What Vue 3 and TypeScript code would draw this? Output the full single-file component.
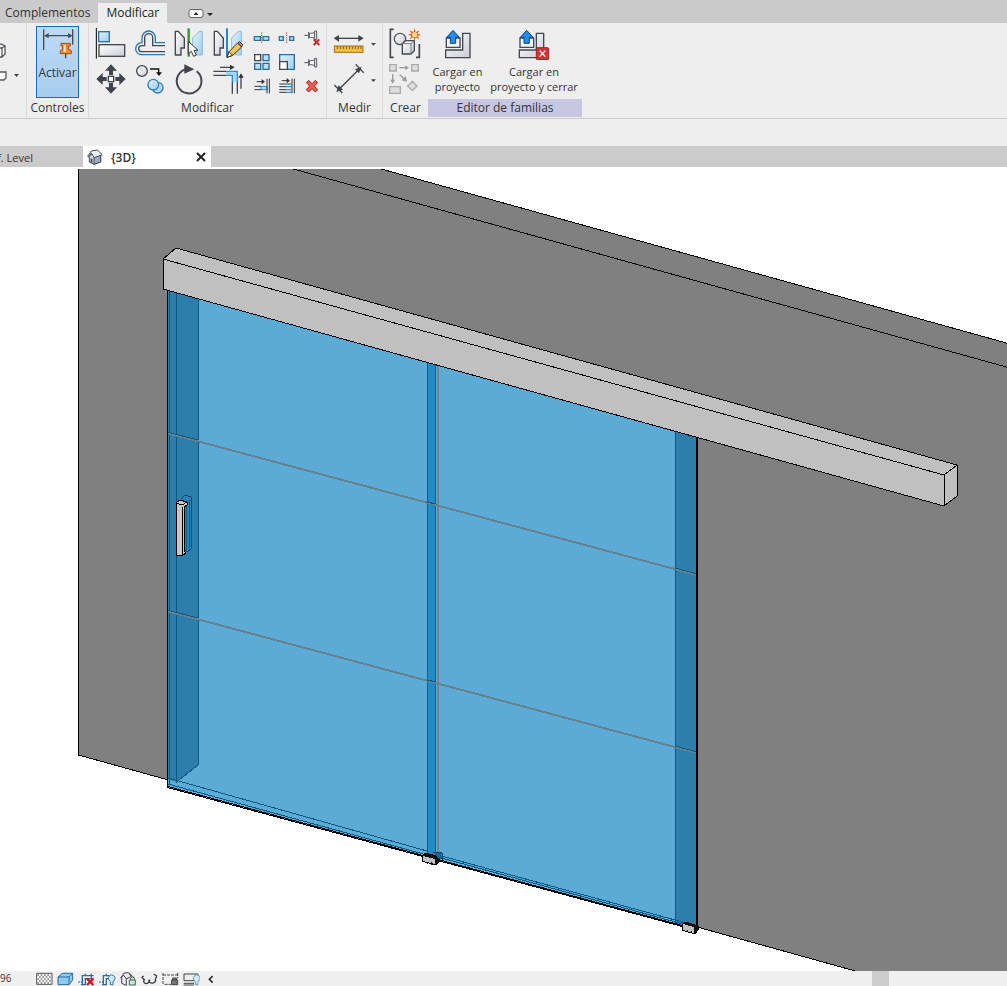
<script setup lang="ts">
import { ref } from 'vue'

const activeTab = ref('Modificar')
const controlsActive = ref(true)
</script>

<template>
  <div class="app">
    <svg class="defs" aria-hidden="true">
      <defs>
        <linearGradient id="metal" x1="0" y1="0" x2="1" y2="1">
          <stop offset="0" stop-color="#fff" />
          <stop offset="1" stop-color="#c9ced6" />
        </linearGradient>
        <linearGradient id="sky" x1="0" y1="0" x2="1" y2="1">
          <stop offset="0" stop-color="#e2f2fc" />
          <stop offset="1" stop-color="#9ccdf0" />
        </linearGradient>
        <g id="pin">
          <path d="M22 19C27 21 33 20 38 16V36C33 32 27 31 22 33Z" fill="#f8f8f8" stroke="#555861" stroke-width="3" />
          <path d="M7 26H20M20 16V36" stroke="#555861" stroke-width="3" />
          <path d="M38 13H44V39H38Z" fill="#f8f8f8" stroke="#555861" stroke-width="3" />
        </g>
        <g id="load">
          <path d="M64 16H86V89H13V66H64Z" fill="url(#metal)" stroke="#44474f" stroke-width="4" />
          <path d="M15 30H56V58H15Z" fill="#f4f5f7" stroke="#44474f" stroke-width="4" />
          <path d="M35 7L54 28H43V46H27V28H16Z" fill="#1e8ef0" stroke="#0b4789" stroke-width="3" />
        </g>
      </defs>
    </svg>

    <nav class="tabs">
      <button class="tab" :class="{ on: activeTab === 'Complementos' }" @click="activeTab = 'Complementos'">Complementos</button>
      <button class="tab" :class="{ on: activeTab === 'Modificar' }" @click="activeTab = 'Modificar'">Modificar</button>
      <button class="collapse" aria-label="Minimizar cinta">
        <svg width="26" height="12" viewBox="0 0 26 12">
          <rect x="2" y="1.500" width="14" height="8" rx="2" fill="#fafafa" stroke="#62656b" />
          <path d="M6.500 7L9 4L11.500 7ZM20 5H26L23 8Z" fill="#25262a" />
        </svg>
      </button>
    </nav>

    <section class="ribbon">
      <div class="panel first">
        <button class="bare" aria-label="Forma">
          <svg width="7" height="16" viewBox="0 0 7 16"><path d="M-4 3L1 1L5 3V11L2 14H-4M2 14V5L5 3M2 5H-4" fill="#fff" stroke="#555861" stroke-width="1.300" /></svg>
        </button>
        <button class="bare wide" aria-label="Opciones de forma">
          <svg width="19" height="14" viewBox="0 0 19 14"><path d="M-3 3H6V9L4 11H-3" fill="#fff" stroke="#555861" stroke-width="1.300" /><path d="M14 5H19L16.500 8Z" fill="#444" /></svg>
        </button>
      </div>

      <div class="panel controls">
        <div class="tools">
          <button class="activate" :class="{ pressed: controlsActive }" @click="controlsActive = !controlsActive">
            <svg width="32" height="32" viewBox="0 0 96 96">
              <path d="M5 4V66M92 4V50M8 23H90" stroke="#444b59" stroke-width="4" />
              <path d="M7 23L20 15V31ZM91 23L78 15V31Z" fill="#444b59" />
              <path d="M71 72V91" stroke="#3e4450" stroke-width="4" />
              <path d="M57 46H85V54H80V64L88 68V77H55V68L62 64V54H57Z" fill="#f08a35" stroke="#ad4b12" stroke-width="3" />
              <path d="M68 50V72" stroke="#ffe3bd" stroke-width="6" />
            </svg>
            <span>Activar</span>
          </button>
        </div>
        <div class="label">Controles</div>
      </div>

      <div class="panel modify">
        <div class="tools">
          <div class="big">
            <button class="bare" aria-label="Alinear"><svg width="32" height="32" viewBox="0 0 96 96">
              <path d="M4 0V92" stroke="#000" stroke-width="3" />
              <rect x="11" y="11" width="32" height="30" fill="url(#sky)" stroke="#2874ad" stroke-width="4" />
              <rect x="12" y="50" width="77" height="35" fill="url(#metal)" stroke="#44474f" stroke-width="4" />
            </svg></button>
            <button class="bare" aria-label="Desfase"><svg width="32" height="32" viewBox="0 0 96 96">
              <path d="M93 44H64V29A20 20 0 0 0 24 29V44H22A17 18 0 0 0 22 80H93" fill="#e5f0f8" stroke="#2d77ae" stroke-width="4" />
              <path d="M93 53H56V29A12 12 0 0 0 32 29V53H23A9 9 0 0 0 23 71H93" fill="#eee" stroke="#44474f" stroke-width="4" />
            </svg></button>
            <button class="bare" aria-label="Reflejar por eje"><svg width="32" height="32" viewBox="0 0 96 96">
              <path d="M7 10H16L34 30V60H24V81H7Z" fill="url(#metal)" stroke="#44474f" stroke-width="4" />
              <path d="M88 10H79L59 30V60H70V81H88Z" fill="url(#sky)" stroke="#8bbddf" stroke-width="3" />
              <path d="M47 1V86" stroke="#37922d" stroke-width="7" />
              <path d="M46 40V77L55 70L62 85L70 81L63 67H75Z" fill="#fff" stroke="#333" stroke-width="3" />
            </svg></button>
            <button class="bare" aria-label="Reflejar dibujando eje"><svg width="32" height="32" viewBox="0 0 96 96">
              <path d="M7 10H16L34 30V60H24V81H7Z" fill="url(#metal)" stroke="#44474f" stroke-width="4" />
              <path d="M88 10H79L59 30V60H70V81H88Z" fill="url(#sky)" stroke="#8bbddf" stroke-width="3" />
              <path d="M45 1V86" stroke="#2d83c7" stroke-width="6" />
              <path d="M45 88L51 71L77 45L89 57L62 82Z" fill="#f8c653" stroke="#3b3225" stroke-width="3" />
              <path d="M45 88L51 71L62 82Z" fill="#fff0c9" stroke="#3b3225" stroke-width="3" />
              <path d="M77 45L83 41L92 50L89 57Z" fill="#d98575" stroke="#3b3225" stroke-width="3" />
            </svg></button>
            <button class="bare" aria-label="Desplazar"><svg width="32" height="32" viewBox="0 0 96 96">
              <path d="M48 1L66 20H54V33H42V20H30ZM48 89L66 70H54V57H42V70H30ZM4 45L23 27V39H35V51H23V63ZM92 45L73 27V39H61V51H73V63Z" fill="#3f434c" />
              <rect x="40" y="37" width="16" height="16" fill="#fff" stroke="#3f434c" stroke-width="4" />
            </svg></button>
            <button class="bare" aria-label="Copiar"><svg width="32" height="32" viewBox="0 0 96 96">
              <circle cx="24" cy="21" r="16" fill="url(#metal)" stroke="#44474f" stroke-width="4" />
              <path d="M48 15H74V29" fill="none" stroke="#111" stroke-width="4" />
              <path d="M66 25H84L75 36Z" fill="#111" />
              <circle cx="71" cy="71" r="16" fill="url(#sky)" stroke="#2f7fb9" stroke-width="4" />
              <circle cx="58" cy="62" r="16" fill="url(#sky)" stroke="#2f7fb9" stroke-width="4" />
            </svg></button>
            <button class="bare" aria-label="Rotar"><svg width="32" height="32" viewBox="0 0 96 96">
              <path d="M71 22A37 37 0 1 1 41 15" fill="none" stroke="#44474f" stroke-width="6" />
              <path d="M34 1V29L64 16Z" fill="#3f434c" />
            </svg></button>
            <button class="bare" aria-label="Recortar esquina"><svg width="32" height="32" viewBox="0 0 96 96">
              <path d="M42 22H76V54H61V34H42Z" fill="#a8d6f7" />
              <path d="M42 22H76V54M42 34H61V54" fill="none" stroke="#388dcc" stroke-width="4" />
              <path d="M4 22H42M4 34H42M61 54V89M76 54V89M24 10H58M87 74V36" stroke="#44474f" stroke-width="4" />
              <path d="M54 2V18L68 10ZM79 41H95L87 28Z" fill="#30333a" />
            </svg></button>
          </div>
          <div class="small">
            <button class="bare" aria-label="Dividir elemento"><svg width="18" height="16" viewBox="0 0 54 48">
              <path d="M7 20H25V31H7ZM33 20H50V31H33Z" fill="#b9def6" stroke="#306f9f" stroke-width="4" /><path d="M29 7V41" stroke="#c73939" stroke-width="3" stroke-dasharray="4 3" />
            </svg></button>
            <button class="bare" aria-label="Dividir con separación"><svg width="18" height="16" viewBox="0 0 54 48">
              <path d="M7 20H19V31H7ZM38 20H50V31H38Z" fill="#b9def6" stroke="#306f9f" stroke-width="4" /><path d="M29 7V41" stroke="#c73939" stroke-width="3" stroke-dasharray="4 3" />
            </svg></button>
            <button class="bare" aria-label="Desbloquear"><svg width="18" height="16" viewBox="0 0 54 48">
              <use href="#pin" y="-10" /><path d="M35 28L52 45M52 28L35 45" stroke="#c8232b" stroke-width="6" />
            </svg></button>
            <button class="bare" aria-label="Matriz"><svg width="18" height="16" viewBox="0 0 54 48">
              <path d="M8 2H26V20H8Z" fill="#fff" stroke="#44474f" stroke-width="4" /><path d="M33 2H51V20H33ZM8 28H26V46H8ZM33 28H51V46H33Z" fill="#b9def6" stroke="#286b9f" stroke-width="4" />
            </svg></button>
            <button class="bare" aria-label="Escala"><svg width="18" height="16" viewBox="0 0 54 48">
              <path d="M8 2H52V46H8Z" fill="url(#sky)" stroke="#286b9f" stroke-width="4" /><path d="M8 23H31V46H8Z" fill="#fff" stroke="#44474f" stroke-width="4" />
            </svg></button>
            <button class="bare" aria-label="Bloquear"><svg width="18" height="16" viewBox="0 0 54 48"><use href="#pin" /></svg></button>
            <button class="bare" aria-label="Recortar un elemento"><svg width="18" height="16" viewBox="0 0 54 48">
              <path d="M27 25H45V35H27Z" fill="#a8d6f7" stroke="#388dcc" stroke-width="3" /><path d="M7 25H27M7 35H27M14 11H30M45 2V46M52 2V46" stroke="#30333a" stroke-width="3" /><path d="M29 3V19L39 11Z" fill="#30333a" />
            </svg></button>
            <button class="bare" aria-label="Recortar varios elementos"><svg width="18" height="16" viewBox="0 0 54 48">
              <path d="M27 18H43M27 26H43M27 35H43M27 43H43" stroke="#388dcc" stroke-width="4" /><path d="M7 18H27M7 26H27M7 35H27M7 43H27M14 8H30M45 2V46M52 2V46" stroke="#30333a" stroke-width="3" /><path d="M29 0V16L39 8Z" fill="#30333a" />
            </svg></button>
            <button class="bare" aria-label="Suprimir"><svg width="18" height="16" viewBox="0 0 54 48">
              <path d="M20 7L30 17L40 7L47 14L37 24L47 35L40 42L30 32L20 42L13 35L23 24L13 14Z" fill="#ee5a52" stroke="#a5222a" stroke-width="3" />
            </svg></button>
          </div>
        </div>
        <div class="label">Modificar</div>
      </div>

      <div class="panel measure">
        <div class="tools">
          <button class="bare" aria-label="Medir"><svg width="46" height="32" viewBox="0 0 138 96">
            <path d="M12 31H88" stroke="#3f434c" stroke-width="4" /><path d="M5 31L21 21V41ZM95 31L79 21V41Z" fill="#3f434c" />
            <rect x="7" y="54" width="86" height="19" fill="#f5bd42" stroke="#a86f12" stroke-width="3" />
            <path d="M16 55V63M25 55V63M34 55V63M43 55V63M52 55V63M61 55V63M70 55V63M79 55V63M87 55V63" stroke="#885c13" stroke-width="3" />
            <path d="M117 45H132L124 53Z" fill="#444" />
          </svg></button>
          <button class="bare" aria-label="Cota alineada"><svg width="46" height="32" viewBox="0 0 138 96">
            <path d="M22 75L82 15M7 63L31 87M71 1L95 26" stroke="#3f434c" stroke-width="4" /><path d="M13 84L20 64L33 77ZM89 8L69 16L81 28Z" fill="#3f434c" />
            <path d="M117 46H132L124 54Z" fill="#444" />
          </svg></button>
        </div>
        <div class="label">Medir</div>
      </div>

      <div class="panel create">
        <div class="tools">
          <button class="bare" aria-label="Crear similar"><svg width="32" height="32" viewBox="0 0 96 96">
            <path d="M14 4H4V88H14M81 88H91V48" fill="none" stroke="#44474f" stroke-width="5" />
            <circle cx="33" cy="33" r="17" fill="url(#metal)" stroke="#555861" stroke-width="4" />
            <path d="M40 47L49 38H76V68L66 78H40Z" fill="url(#metal)" stroke="#44474f" stroke-width="4" /><path d="M40 47H66V78M66 47L76 38" fill="none" stroke="#777b83" stroke-width="3" />
            <path d="M77 1L80 13L91 7L85 17L96 20L85 24L91 34L80 28L77 39L73 28L62 34L68 24L57 20L68 17L62 7L73 13Z" fill="#d95812" /><circle cx="77" cy="20" r="8" fill="#ffda84" />
          </svg></button>
          <button class="bare" aria-label="Crear grupo" disabled><svg width="32" height="32" viewBox="0 0 96 96">
            <path d="M2 2H22V21H2ZM68 2H88V21H68ZM2 68H34V88H2ZM70 52L84 66L70 80L56 66Z" fill="#ddd" stroke="#aaa" stroke-width="4" />
            <path d="M31 11H52M11 31V50M32 32L47 46" stroke="#999" stroke-width="4" /><path d="M49 4V18L60 11ZM4 47H18L11 59ZM54 53L38 49L50 37Z" fill="#999" />
          </svg></button>
        </div>
        <div class="label">Crear</div>
      </div>

      <div class="panel editor">
        <div class="tools">
          <button class="load one"><svg width="32" height="32" viewBox="0 0 96 96"><use href="#load" x="-2" /></svg><span>Cargar en<br>proyecto</span></button>
          <button class="load two"><svg width="32" height="32" viewBox="0 0 96 96">
            <use href="#load" x="-9" />
            <rect x="55" y="59" width="37" height="36" rx="3" fill="#d33335" stroke="#9e2022" stroke-width="3" /><path d="M65 68L82 86M82 68L65 86" stroke="#fff" stroke-width="4" />
          </svg><span>Cargar en<br>proyecto y cerrar</span></button>
        </div>
        <div class="label">Editor de familias</div>
      </div>
    </section>

    <div class="options"></div>

    <div class="docs">
      <button class="doc rest">f. Level</button>
      <div class="doc current">
        <svg width="16" height="16" viewBox="0 0 48 48">
          <path d="M7 20V39L21 46L41 39V18L27 7Z" fill="#cbd7e8" stroke="#44474f" stroke-width="3" />
          <path d="M21 46V24L41 18V39Z" fill="#9dacc4" stroke="#44474f" stroke-width="3" />
          <path d="M2 22L13 6L31 3L46 17L22 26L13 12L5 24Z" fill="#eef2f8" stroke="#44474f" stroke-width="3" />
          <path d="M11 28V40L16 43V30Z" fill="#44474f" />
        </svg>
        <button class="name">{3D}</button>
        <button class="bare close" aria-label="Cerrar vista"><svg width="10" height="10" viewBox="0 0 10 10"><path d="M1 1L9 9M9 1L1 9" stroke="#222" stroke-width="2" /></svg></button>
      </div>
    </div>

    <main class="view">
      <svg viewBox="0 169 1007 802" preserveAspectRatio="xMinYMin slice" role="img" aria-label="Puerta corredera en vista 3D">
        <g stroke-width="1" shape-rendering="crispEdges">
          <!-- wall -->
          <path d="M78 160H349L1010 344V1014L78 755Z" fill="#808080" />
          <path d="M78.500 160V755L1010 1014M349 160L1010 344M261 160L1010 368" fill="none" stroke="#000" />

          <!-- glass leaf and wall opening -->
          <path d="M167 289L697 436V931L167 787Z" fill="#5cabd6" />
          <path d="M167 289L198 298V765L177 782L167 779Z" fill="#2d7eaa" />
          <path d="M675 430L697 436V930L675 924Z" fill="#2d7eaa" />
          <path d="M169.500 289V785M176.500 291V782L198 765V298M675.500 431V922" fill="none" stroke="#0c5880" />
          <path d="M427 361H436V856H427Z" fill="#218bc4" />
          <path d="M427.500 361V854M435.500 363V856" stroke="#0d608f" />
          <path d="M438 363V858" stroke="#71848f" stroke-width="2" />
          <path d="M167 433L697 575M167 611L697 753" stroke="#66808d" stroke-width="2" />
          <path d="M167 432L198 440M427 502L436 504M675 568L697 574M167 610L198 618M427 680L436 682M675 746L697 752" stroke="#0f5b83" />
          <path d="M168 778L427 851M438 855L697 926M168 784L427 855M438 857L690 926" fill="none" stroke="#07577f" />
          <path d="M167.500 289V787.500L697 930.500M168 786.500L697 929.500" fill="none" stroke="#000" />
          <path d="M697 436V931" stroke="#000" stroke-width="2" />

          <!-- top rail cover -->
          <path d="M163 259L176 248L957 465V496L944 506L163 289Z" fill="#c0c0c0" stroke="#000" />
          <path d="M163 259L944 475L957 465M944 475V506" fill="none" stroke="#000" />

          <!-- pull handle -->
          <path d="M181 499L185 495L191 497V549L187 552L184 549" fill="#2684b7" stroke="#06476b" />
          <path d="M186 502V550M189 500V548" stroke="#0b5c86" />
          <path d="M176 503L180 500L187 502V505L184 507V551L186 553L182 556L176 555Z" fill="#c8c8c8" stroke="#000" />
          <path d="M182.500 507V555M176 503L182 505L187 502" fill="none" stroke="#000" />

          <!-- floor guides -->
          <path d="M422 856L426 853L439 857V862L436 865L422 861Z" fill="#111" stroke="#000" />
          <path d="M423 856L435 859V864L423 861Z" fill="#c0c0c0" />
          <path d="M433 852L442 853V859L438 858" fill="#176c99" stroke="#064568" />
          <path d="M682 925L686 922L698 926V930L695 934L682 930Z" fill="#111" stroke="#000" />
          <path d="M683 924L694 927V933L683 930Z" fill="#c0c0c0" />
          <path d="M427 862V864M431 862V865M687 930V932M691 931V933" stroke="#111" />
        </g>
      </svg>
    </main>

    <footer class="status">
      <button class="scale">96</button>
      <button class="bare" aria-label="Nivel de detalle"><svg width="17" height="14" viewBox="0 0 51 42"><path d="M2 4H48V37H2Z" fill="#fff" stroke="#555" stroke-width="3" /><path d="M4 9H46M4 21H46M4 33H46" stroke="#777" stroke-width="5" stroke-dasharray="5 5" /><path d="M9 15H46M9 27H46" stroke="#777" stroke-width="5" stroke-dasharray="5 5" /></svg></button>
      <button class="bare" aria-label="Estilo visual"><svg width="17" height="14" viewBox="0 0 51 42"><path d="M3 15L16 4H47V24L36 38H3Z" fill="#8ecaf0" stroke="#286a9d" stroke-width="3" /><path d="M3 15H36V38M36 15L47 4" fill="none" stroke="#286a9d" stroke-width="3" /></svg></button>
      <button class="bare" aria-label="Recortar vista"><svg width="17" height="14" viewBox="0 0 51 42"><path d="M1 30H5M9 30H13V11H47M9 38H22V20H47M13 30V39M22 5V11M40 5V20" fill="none" stroke="#2a6d9e" stroke-width="4" /><path d="M27 20L46 39M46 20L27 39" stroke="#c71924" stroke-width="7" /></svg></button>
      <button class="bare" aria-label="Mostrar región de recorte"><svg width="17" height="14" viewBox="0 0 51 42"><path d="M1 30H5M9 30H13V11H32M9 38H22V20H30M13 30V39M22 5V11" fill="none" stroke="#2a6d9e" stroke-width="4" /><path d="M34 28V38H42V28A10 10 0 1 0 34 28Z" fill="#cceaff" stroke="#3572a0" stroke-width="3" /></svg></button>
      <button class="bare" aria-label="Vista bloqueada"><svg width="17" height="14" viewBox="0 0 51 42"><path d="M5 18V34L19 40V21L34 13L25 2L12 3L2 18L11 10L19 21M27 3L43 18" fill="#e5e9ee" stroke="#44474f" stroke-width="3" /><path d="M28 24H46V39H28ZM31 24V18Q37 11 43 18V24" fill="#cce4d2" stroke="#456357" stroke-width="3" /></svg></button>
      <button class="bare" aria-label="Ocultar temporalmente"><svg width="17" height="14" viewBox="0 0 51 42"><path d="M8 12L3 16L10 23A8 7 0 1 0 24 28A9 7 0 1 0 43 22L47 12L38 6M24 28L27 23" fill="none" stroke="#353d48" stroke-width="4" /></svg></button>
      <button class="bare" aria-label="Mostrar restricciones"><svg width="17" height="14" viewBox="0 0 51 42"><path d="M3 3V39M47 3V18M3 9H47M8 37H27" stroke="#444" stroke-width="3" stroke-dasharray="9 3" /><path d="M29 24H47V38H29ZM32 24V18H44V24" fill="#777" stroke="#444" stroke-width="3" /></svg></button>
      <button class="bare" aria-label="Propiedades temporales"><svg width="17" height="14" viewBox="0 0 51 42"><path d="M3 6H45V26H3ZM2 34H33M2 39H33" fill="#eee" stroke="#444" stroke-width="3" /><path d="M37 28V38H45V28A10 10 0 1 0 37 28Z" fill="#cceaff" stroke="#6d9abb" stroke-width="3" /></svg></button>
      <button class="bare" aria-label="Contraer"><svg width="17" height="14" viewBox="0 0 51 42"><path d="M26 12L16 22L26 32" fill="none" stroke="#333" stroke-width="5" /></svg></button>
      <div class="track"><div class="thumb"></div></div>
    </footer>
  </div>
</template>

<style>
html,
body {
  background: #fff;
  overflow: hidden;
}
</style>

<style scoped>
.app {
  height: 100vh;
  display: flex;
  flex-direction: column;
  overflow: hidden;
  font-family: "Open Sans", "Noto Sans", sans-serif;
  font-size: 12px;
  line-height: 15px;
  color: #333;
}
.defs {
  position: absolute;
  width: 0;
  height: 0;
}
button {
  font: inherit;
  color: inherit;
  background: none;
  border: 0;
  padding: 0;
  margin: 0;
}
svg {
  display: block;
}
.tabs {
  flex: none;
  height: 23px;
  display: flex;
  align-items: flex-end;
  background: #cacaca;
}
.tab {
  height: 20px;
  padding: 0 8px 1px;
}
.tab:first-child {
  padding-left: 5px;
}
.tab.on {
  background: #eee;
  color: #222;
}
.collapse {
  margin-left: 20px;
  height: 15px;
  display: flex;
  align-items: flex-start;
}
.ribbon {
  flex: none;
  height: 95px;
  display: flex;
  background: #eee;
  border-bottom: 1px solid #c9c9c9;
}
.panel {
  display: flex;
  flex-direction: column;
  border-right: 1px solid #dcdcdc;
  box-sizing: border-box;
}
.tools {
  flex: 1;
}
.label {
  height: 18px;
  line-height: 18px;
  margin-bottom: 1px;
  text-align: center;
  white-space: nowrap;
}
.first {
  width: 27px;
  padding-top: 20px;
  gap: 10px;
  align-items: flex-start;
}
.controls {
  width: 62px;
}
.activate {
  width: 43px;
  height: 72px;
  box-sizing: border-box;
  margin: 3px 9px 0;
  padding-bottom: 17px;
  display: flex;
  flex-direction: column;
  align-items: center;
  justify-content: flex-end;
  gap: 5px;
  border: 1px solid transparent;
}
.activate.pressed {
  background: linear-gradient(#bddaf5, #a7ceef);
  border-color: #2069b4;
}
.modify {
  width: 238px;
}
.modify .tools {
  display: flex;
  gap: 8px;
  padding: 5px 0 0 6px;
}
.big {
  display: grid;
  grid-template-columns: repeat(4, 32px);
  grid-auto-rows: 32px;
  gap: 4px 7px;
}
.small {
  display: grid;
  grid-template-columns: repeat(3, 18px);
  grid-auto-rows: 16px;
  gap: 8px 7px;
  padding-top: 2px;
}
.measure {
  width: 56px;
}
.create {
  width: 45px;
  border-right: 0;
}
.measure .tools,
.create .tools {
  display: flex;
  flex-direction: column;
  gap: 4px;
  padding: 5px 0 0 5px;
  align-items: flex-start;
}
.create .tools {
  padding-left: 6px;
}
.editor {
  width: 154px;
  border-right: 0;
}
.editor .tools {
  display: flex;
  align-items: flex-start;
  padding-top: 5px;
}
.load {
  display: flex;
  flex-direction: column;
  align-items: center;
  gap: 4px;
  white-space: nowrap;
  font-size: 11px;
}
.one {
  width: 59px;
}
.two {
  width: 94px;
}
.editor .label {
  background: #c7c7e3;
}
.options {
  flex: none;
  height: 27px;
  background: #eee;
}
.docs {
  flex: none;
  height: 21px;
  display: flex;
  background: #cbcbcb;
  border-bottom: 2px solid #fff;
}
.doc {
  display: flex;
  align-items: center;
}
.rest {
  width: 83px;
  box-sizing: border-box;
  padding: 1px 50px 0 0;
  justify-content: flex-end;
  white-space: nowrap;
  font-size: 11px;
}
.current {
  width: 128px;
  box-sizing: border-box;
  padding: 1px 5px 0 4px;
  background: #fff;
}
.name {
  font-weight: 600;
  margin-left: 8px;
}
.close {
  margin-left: auto;
}
.view {
  flex: 1;
  min-height: 0;
}
.view svg {
  width: 100%;
  height: 100%;
}
.status {
  flex: none;
  height: 15px;
  display: flex;
  align-items: center;
  gap: 4px;
  background: #f0f0f0;
}
.scale {
  width: 32px;
  text-align: left;
  font-size: 10px;
}
.track {
  flex: 1;
  align-self: stretch;
  display: flex;
  justify-content: flex-end;
}
.thumb {
  width: 17px;
  margin-right: 118px;
  background: #cdcdcd;
}
</style>
